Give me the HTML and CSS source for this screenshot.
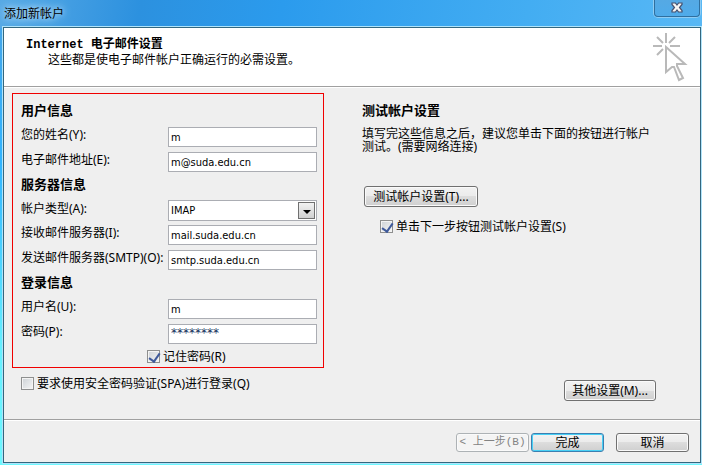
FILE: index.html
```
<!DOCTYPE html>
<html lang="zh-CN">

<head>
    <meta charset="UTF-8">
    <meta name="viewport" content="width=device-width, initial-scale=1.0">
    <title>添加新帐户</title>
    <link rel="stylesheet" href="styles.css">
</head>

<body>

    <div class="window">

        <div class="title-bar">
            <span class="title-text">添加新帐户</span>
            <button type="button" class="close-button" aria-label="关闭">
                <svg width="12" height="11" viewBox="0 0 12 11">
                    <path d="M1 1h3.400l1.600 2 1.600-2h3.400v1.500l-2.500 3 2.500 3v1.500h-3.400l-1.600-2-1.600 2h-3.400v-1.500l2.500-3-2.500-3z" fill="#f4f4f4" stroke="#46506e" stroke-width="1.200" />
                </svg>
            </button>
        </div>

        <form class="dialog">

            <header class="dialog-header">
                <div>
                    <h1>Internet 电子邮件设置</h1>
                    <p>这些都是使电子邮件帐户正确运行的必需设置。</p>
                </div>
                <svg class="cursor-icon" width="36" height="52" viewBox="0 0 36 52" fill="none" stroke="#b9b9b9" stroke-width="2">
                    <path d="M14 1v10M1 14h9M18 14h10M5 5l6 6M23 5l-6 6M5 23l6-6" />
                    <path d="M14 15v25l6-5h2l5 13 4-2-6-12v-2h8z" />
                </svg>
            </header>

            <main class="dialog-body">

                <section class="left-column">

                    <div class="account-box">

                        <h2>用户信息</h2>
                        <div class="field-row">
                            <label for="name">您的姓名(Y):</label>
                            <input type="text" id="name" class="field" value="m">
                        </div>
                        <div class="field-row">
                            <label for="email">电子邮件地址(E):</label>
                            <input type="text" id="email" class="field" value="m@suda.edu.cn">
                        </div>

                        <h2>服务器信息</h2>
                        <div class="field-row select-row">
                            <label for="type">帐户类型(A):</label>
                            <div class="select-box">
                                <select id="type" class="field">
                                    <option>IMAP</option>
                                    <option>POP3</option>
                                </select>
                                <span class="select-arrow"></span>
                            </div>
                        </div>
                        <div class="field-row">
                            <label for="incoming">接收邮件服务器(I):</label>
                            <input type="text" id="incoming" class="field" value="mail.suda.edu.cn">
                        </div>
                        <div class="field-row">
                            <label for="outgoing">发送邮件服务器(SMTP)(O):</label>
                            <input type="text" id="outgoing" class="field" value="smtp.suda.edu.cn">
                        </div>

                        <h2>登录信息</h2>
                        <div class="field-row">
                            <label for="user">用户名(U):</label>
                            <input type="text" id="user" class="field" value="m">
                        </div>
                        <div class="field-row">
                            <label for="password">密码(P):</label>
                            <input type="text" id="password" class="field password" value="********">
                        </div>

                        <label class="check remember"><input type="checkbox" checked>记住密码(R)</label>

                    </div>

                    <label class="check spa"><input type="checkbox">要求使用安全密码验证(SPA)进行登录(Q)</label>

                </section>

                <section class="right-column">
                    <h2>测试帐户设置</h2>
                    <p>填写完这些信息之后，建议您单击下面的按钮进行帐户测试。(需要网络连接)</p>
                    <button type="button" class="button test-button">测试帐户设置(T)...</button>
                    <label class="check test-check"><input type="checkbox" checked>单击下一步按钮测试帐户设置(S)</label>
                    <button type="button" class="button more-button">其他设置(M)...</button>
                </section>

            </main>

            <footer class="dialog-footer">
                <button type="button" class="button back-button" disabled>&lt; 上一步(B)</button>
                <button type="button" class="button finish-button">完成</button>
                <button type="button" class="button cancel-button">取消</button>
            </footer>

        </form>

    </div>

</body>

</html>
```
FILE: styles.css
```
* {
    box-sizing: border-box;
}

body {
    margin: 0;
    font-family: "Noto Sans", "Noto Sans CJK SC", sans-serif;
    font-size: 12px;
    line-height: 13px;
    color: #000;
}

h1,
h2,
p {
    margin: 0;
}

.window {
    display: flex;
    flex-direction: column;
    min-height: 100vh;
    padding: 0 1px 2px 3px;
    background:
        linear-gradient(100deg, #58a9e5 0, #2c91df 20%, #2b9bed 40%, #43adf2 75%, #58b8f5 100%) top / 100% 28px no-repeat,
        linear-gradient(#48a2e5, #30b4ff 35%, #65f0ff 75%, #6df8ff);
}

.title-bar {
    display: flex;
    justify-content: space-between;
    align-items: flex-start;
    height: 27px;
}

.title-text {
    margin-top: 7px;
    padding: 0 1px;
    text-shadow: 0 0 5px #a9d6f5, 0 0 8px #a9d6f5, 0 0 12px #a9d6f5;
}

.close-button {
    display: flex;
    justify-content: center;
    width: 46px;
    height: 17px;
    margin-right: 1px;
    padding: 2px 0 0;
    border: 1px solid #2f6f9f;
    border-top: 0;
    border-radius: 0 0 4px 4px;
    background: linear-gradient(#55a9e4, #4fabea);
    box-shadow: 0 0 0 1px #8fccf3;
}

.dialog {
    display: flex;
    flex-direction: column;
    flex: 1;
    border: 1px solid #33677f;
    background: #efefef;
    box-shadow: 0 0 0 1px #b0e4fa;
}

.dialog-header {
    display: flex;
    justify-content: space-between;
    height: 59px;
    padding: 4px 12px 0 22px;
    border-bottom: 1px solid #a0a0a0;
    background: #fff;
}

.dialog-header h1 {
    margin-top: 6px;
    font-family: "Liberation Mono", "Noto Sans CJK SC", monospace;
    font-size: 12px;
    line-height: 14px;
}

.dialog-header p {
    padding-left: 22px;
    line-height: 15px;
}

.dialog-body {
    display: flex;
    flex: 1;
    padding: 5px 8px 0;
    border-top: 1px solid #fff;
}

.left-column {
    width: 312px;
}

h2 {
    height: 19px;
    margin-bottom: 5px;
    font-size: 13px;
    line-height: 15px;
}

.account-box {
    padding: 9px 6px 3px 8px;
    border: 1px solid #f00000;
}

.field-row {
    display: flex;
    justify-content: space-between;
    height: 20px;
    margin-bottom: 5px;
}

.field-row label {
    line-height: 15px;
}

.select-row {
    height: 19px;
}

.field {
    width: 149px;
    height: 20px;
    padding: 0 2px;
    border: 1px solid #abadb3;
    border-radius: 0;
    background: #fff;
    color: #000;
    font-family: "DejaVu Sans Condensed", "DejaVu Sans", sans-serif;
    font-size: 11px;
}

.select-box {
    position: relative;
    align-self: center;
}

select.field {
    display: block;
    height: 21px;
    appearance: none;
}

.select-arrow {
    position: absolute;
    top: 2px;
    right: 2px;
    width: 17px;
    height: 17px;
    border: 1px solid #707070;
    background: linear-gradient(#f2f2f2, #d0d0d0);
    pointer-events: none;
}

.select-arrow::after {
    content: "";
    position: absolute;
    top: 7px;
    left: 4px;
    border: 4px solid transparent;
    border-top-color: #000;
    border-bottom: 0;
}

.field.password {
    padding-bottom: 2px;
    color: #10305c;
    font-family: "DejaVu Sans", sans-serif;
    font-size: 12px;
}

.check {
    display: flex;
    align-items: center;
    gap: 3px;
    height: 15px;
}

.check input {
    appearance: none;
    width: 13px;
    height: 13px;
    margin: 0;
    border: 1px solid #8e8f8f;
    background: linear-gradient(135deg, #cdd2d6, #f6f6f6);
    box-shadow: inset 0 0 0 1px #f4f4f4;
}

.check input:checked::after {
    content: "";
    display: block;
    width: 5px;
    height: 9px;
    margin-left: 3px;
    border: solid #3f5a9b;
    border-width: 0 2px 2px 0;
    transform: rotate(35deg);
}

.remember {
    padding-left: 126px;
}

.spa {
    margin-top: 8px;
    padding-left: 9px;
}

.right-column {
    display: flex;
    flex-direction: column;
    align-items: flex-start;
    flex: 1;
    padding: 10px 36px 18px 38px;
}

.right-column p {
    max-width: 290px;
}

.button {
    height: 21px;
    padding: 0;
    border: 1px solid #707070;
    border-radius: 3px;
    background: linear-gradient(#f2f2f2 0, #ebebeb 50%, #dddddd 50%, #cfcfcf 100%);
    box-shadow: inset 0 0 0 1px #fafafa;
    color: #000;
    font: inherit;
    white-space: nowrap;
}

.test-button {
    width: 114px;
    margin: 33px 0 0 2px;
}

.test-check {
    margin: 12px 0 0 18px;
}

.more-button {
    width: 92px;
    margin-top: auto;
    margin-left: auto;
}

.dialog-footer {
    display: flex;
    justify-content: flex-end;
    height: 43px;
    padding: 13px 11px 0;
    border-top: 1px solid #a0a0a0;
    box-shadow: inset 0 1px #fff;
}

.dialog-footer .button {
    width: 73px;
    height: 19px;
}

.dialog-footer .back-button {
    border-color: #adb2b5;
    background: #f4f4f4;
    color: #838383;
    font-family: "Liberation Mono", "Noto Sans CJK SC", monospace;
    font-size: 11px;
}

.dialog-footer .finish-button {
    margin: 0 12px 0 2px;
    border-color: #3c7fb1;
    box-shadow: inset 0 0 0 1px #48d0f5;
}
```
